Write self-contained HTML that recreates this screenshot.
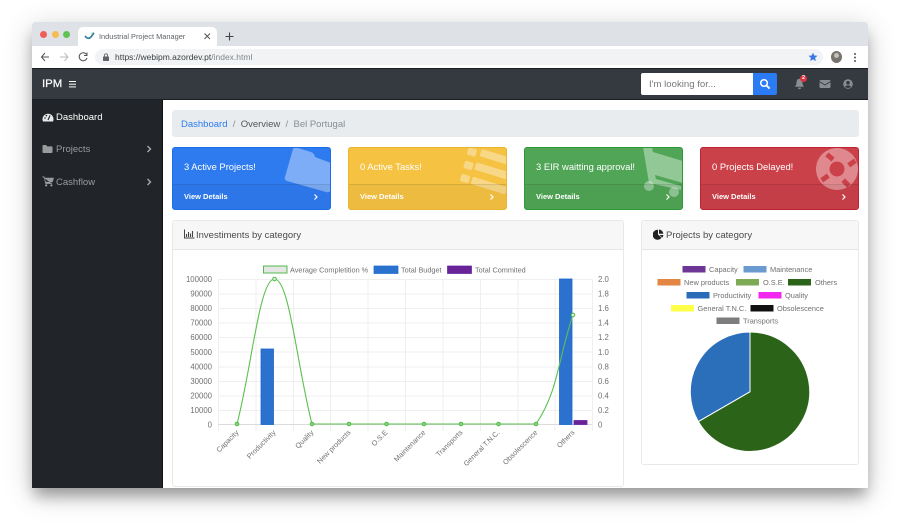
<!DOCTYPE html>
<html><head><meta charset="utf-8">
<style>
*{box-sizing:border-box;margin:0;padding:0}
html,body{width:900px;height:531px;overflow:hidden;background:#fff;font-family:"Liberation Sans",sans-serif}
.a{position:absolute;white-space:nowrap}
#win{position:absolute;left:32px;top:22px;width:836px;height:466px;box-shadow:0 10px 14px -2px rgba(0,0,0,.3),0 6px 30px rgba(0,0,0,.2);border-radius:4px 4px 2px 2px}
.card{position:absolute;top:147px;width:159px;height:63px;border-radius:3px;overflow:hidden;color:#fff}
.card .t{position:absolute;left:11px;top:12px;font-size:9.4px;line-height:13px;white-space:nowrap}
.card .f{position:absolute;left:0;right:0;top:36px;bottom:0;background:rgba(0,0,0,.035);border-top:1px solid rgba(0,0,0,.09)}
.card .v{position:absolute;left:11px;top:7px;font-size:7.5px;line-height:10px;font-weight:bold}
.card svg{position:absolute;left:0;top:0}
.panel{position:absolute;background:#fff;border:1px solid #e8e8e8;border-radius:3px}
.ph{position:absolute;left:0;right:0;top:0;height:29px;background:#f7f7f7;border-bottom:1px solid #e6e6e6;border-radius:3px 3px 0 0}
.side{font-size:9.5px;color:#9a9b9d}
</style></head>
<body>
<div id="win"></div>
<!-- browser chrome -->
<div class="a" style="left:32px;top:22px;width:836px;height:24px;background:#dee1e6;border-radius:4px 4px 0 0"></div>
<div class="a" style="left:40px;top:31px;width:7px;height:7px;border-radius:50%;background:#ee5f57"></div>
<div class="a" style="left:52px;top:31px;width:7px;height:7px;border-radius:50%;background:#f5bd4f"></div>
<div class="a" style="left:63px;top:31px;width:7px;height:7px;border-radius:50%;background:#62c354"></div>
<div class="a" style="left:78px;top:27px;width:139px;height:19px;background:#fff;border-radius:5px 5px 0 0"></div>
<svg class="a" style="left:84px;top:31px" width="12" height="10" viewBox="0 0 12 10"><path d="M1 5 Q4 9 7 6 L10 2" stroke="#2b7d9c" stroke-width="1.6" fill="none"/><path d="M7 3 L10 1" stroke="#9cc" stroke-width="1"/></svg>
<div class="a" style="left:99px;top:31.5px;font-size:7.4px;line-height:10px;color:#5f6368">Industrial Project Manager</div>
<svg class="a" style="left:203px;top:32px" width="9" height="9"><path d="M1.5 1.5 L7 7 M7 1.5 L1.5 7" stroke="#555" stroke-width="1"/></svg>
<svg class="a" style="left:224px;top:31px" width="11" height="11"><path d="M5.5 1.5 V9.5 M1.5 5.5 H9.5" stroke="#444" stroke-width="1.1"/></svg>
<div class="a" style="left:32px;top:46px;width:836px;height:22px;background:#fff"></div>
<svg class="a" style="left:40px;top:50px" width="50" height="14" fill="none"><path d="M1.5 7 H9 M5 3 L1.5 7 L5 11" stroke="#555" stroke-width="1"/><path d="M20 7 H28 M24.5 3 L28 7 L24.5 11" stroke="#bbb" stroke-width="1"/><path d="M46.5 4.5 A4 4 0 1 0 47 8" stroke="#555" stroke-width="1"/><path d="M47 2.5 V5.5 H44" stroke="#555" stroke-width="1"/></svg>
<div class="a" style="left:95px;top:49px;width:728px;height:16px;background:#f1f3f4;border-radius:8px"></div>
<svg class="a" style="left:102px;top:53px" width="8" height="9"><rect x="1" y="3.5" width="6" height="4.5" rx=".6" fill="#5f6368"/><path d="M2.4 3.5 V2.4 A1.6 1.6 0 0 1 5.6 2.4 V3.5" stroke="#5f6368" fill="none" stroke-width=".9"/></svg>
<div class="a" style="left:115px;top:52px;font-size:8.5px;line-height:11px;color:#3c4043">https://webipm.azordev.pt<span style="color:#80868b">/index.html</span></div>
<svg class="a" style="left:808px;top:52px" width="10" height="10"><path d="M5 .6 L6.3 3.5 L9.5 3.8 L7.1 5.9 L7.8 9.1 L5 7.4 L2.2 9.1 L2.9 5.9 L.5 3.8 L3.7 3.5 Z" fill="#3b78e7"/></svg>
<div class="a" style="left:831px;top:51px;width:11px;height:12px;border-radius:50%;background:#77736d"></div>
<div class="a" style="left:834px;top:53px;width:5px;height:5px;border-radius:50%;background:#c4c1ba"></div>
<div class="a" style="left:854px;top:53px;width:2px;height:2px;background:#555;border-radius:50%;box-shadow:0 3.5px 0 #555,0 7px 0 #555"></div>
<!-- navbar -->
<div class="a" style="left:32px;top:68px;width:836px;height:32px;background:#343a40;border-top:1px solid #1c1f22;border-bottom:1px solid #1c1f22"></div>
<div class="a" style="left:42px;top:77px;font-size:11.4px;line-height:15px;color:#fff;-webkit-text-stroke:.2px #fff">IPM</div>
<div class="a" style="left:69px;top:81px;width:7px;height:1.4px;background:#fff;box-shadow:0 2.7px 0 #fff,0 5.4px 0 #fff"></div>
<div class="a" style="left:641px;top:73px;width:112px;height:22px;background:#fff;border-radius:2px 0 0 2px;font-size:9.6px;line-height:23px;color:#777;padding-left:8px">I'm looking for...</div>
<div class="a" style="left:753px;top:73px;width:24px;height:22px;background:#2b7bf4;border-radius:0 2px 2px 0"></div>
<svg class="a" style="left:759px;top:78px" width="12" height="12" fill="none"><circle cx="5" cy="5" r="3.3" stroke="#fff" stroke-width="1.5"/><path d="M7.6 7.6 L10.6 10.6" stroke="#fff" stroke-width="1.9"/></svg>
<svg class="a" style="left:794px;top:78px" width="11" height="12"><path d="M5.5 .8 C8 .8 8.5 3 8.5 5 C8.5 7 9.7 8 10 8.8 H1 C1.3 8 2.5 7 2.5 5 C2.5 3 3 .8 5.5 .8 Z" fill="#8a8e92"/><path d="M4 9.6 H7 A1.5 1.5 0 0 1 4 9.6" fill="#8a8e92"/></svg>
<div class="a" style="left:800px;top:75px;width:7px;height:7px;border-radius:50%;background:#d9333f;color:#fff;font-size:5.5px;line-height:7px;text-align:center;font-weight:bold">2</div>
<svg class="a" style="left:819px;top:79px" width="12" height="10"><rect x=".5" y="1" width="11" height="8" rx="1" fill="#8a8e92"/><path d="M.5 2.6 L6 6 L11.5 2.6" stroke="#343a40" stroke-width=".9" fill="none"/></svg>
<svg class="a" style="left:843px;top:79px" width="10" height="10"><circle cx="5" cy="5" r="4.8" fill="#8a8e92"/><circle cx="5" cy="3.8" r="1.8" fill="#343a40"/><path d="M2 8 C2.5 5.8 7.5 5.8 8 8 C6.5 9.3 3.5 9.3 2 8 Z" fill="#343a40"/></svg>
<!-- sidebar -->
<div class="a" style="left:32px;top:100px;width:131px;height:388px;background:#212529;border-right:1px solid #111"></div>
<svg class="a" style="left:42px;top:112px" width="12" height="10"><path d="M1 9.5 A5.5 5.5 0 1 1 11 9.5 Z" fill="#e9e9ea"/><path d="M6 8 L8 3.5" stroke="#212529" stroke-width="1.1"/><circle cx="3" cy="6" r=".8" fill="#212529"/><circle cx="4.4" cy="3.6" r=".8" fill="#212529"/></svg>
<div class="a side" style="left:56px;top:112px;line-height:12px;color:#fff">Dashboard</div>
<svg class="a" style="left:42px;top:144px" width="11" height="10"><path d="M.5 2 Q.5 1 1.5 1 H4 L5.2 2.4 H9.5 Q10.5 2.4 10.5 3.4 V8 Q10.5 9 9.5 9 H1.5 Q.5 9 .5 8 Z" fill="#9a9b9d"/></svg>
<div class="a side" style="left:56px;top:144px;line-height:12px">Projects</div>
<svg class="a" style="left:146px;top:145px" width="6" height="8" fill="none"><path d="M1.5 1 L4.5 4 L1.5 7" stroke="#a6a7a9" stroke-width="1.4"/></svg>
<svg class="a" style="left:42px;top:176px" width="12" height="11"><path d="M.3 .8 H2.2 L3.6 7.6 H10 M2.8 2 H11.5 L10.4 6 H3.4 Z" fill="#9a9b9d" stroke="#9a9b9d" stroke-width=".6"/><circle cx="4.2" cy="9.4" r="1.1" fill="#9a9b9d"/><circle cx="9.4" cy="9.4" r="1.1" fill="#9a9b9d"/></svg>
<div class="a side" style="left:56px;top:177px;line-height:12px">Cashflow</div>
<svg class="a" style="left:146px;top:178px" width="6" height="8" fill="none"><path d="M1.5 1 L4.5 4 L1.5 7" stroke="#a6a7a9" stroke-width="1.4"/></svg>
<!-- content -->
<div class="a" style="left:163px;top:100px;width:705px;height:388px;background:#fff"></div>
<div class="a" style="left:172px;top:110px;width:687px;height:27px;background:#e9ecef;border-radius:3px;font-size:9.5px;line-height:29px;padding-left:9px;color:#868e96"><span style="color:#2b7bf4">Dashboard</span>&nbsp; /&nbsp; <span style="color:#555">Overview</span>&nbsp; /&nbsp; Bel Portugal</div>

<div class="card" style="left:172px;background:#2e7bf0;border:1px solid #1c6ee8">
<svg width="159" height="63"><path d="M120 1 Q121 -1 125 0 L138 4 Q141 5 142 9 L158 15 V42 Q157 45 153 44 L114 33 Q111 32 112 29 Z" fill="#fff" fill-opacity=".38"/></svg>
<div class="t">3 Active Projects!</div><div class="f"><div class="v">View Details</div></div>
<svg style="left:140px;top:45px" width="6" height="8" fill="none"><path d="M1.5 1.5 L4 4 L1.5 6.5" stroke="#fff" stroke-width="1.2"/></svg></div>

<div class="card" style="left:348px;background:#f5c242;border:1px solid #e9b52f">
<svg width="159" height="63" fill="#fff" fill-opacity=".36"><rect x="118.5" y="0.2" width="9" height="7.6" rx="1.5" transform="rotate(17 123 4)"/><rect x="131" y="5.2" width="30" height="7.6" rx="1.5" transform="rotate(17 146 9)"/><rect x="115" y="13.7" width="9" height="7.6" rx="1.5" transform="rotate(17 119.5 17.5)"/><rect x="125.5" y="19.2" width="35" height="7.6" rx="1.5" transform="rotate(17 143 23)"/><rect x="111.5" y="26.7" width="9" height="7.6" rx="1.5" transform="rotate(17 116 30.5)"/><rect x="122" y="33.7" width="36" height="7.6" rx="1.5" transform="rotate(17 140 37.5)"/></svg>
<div class="t">0 Active Tasks!</div><div class="f"><div class="v">View Details</div></div>
<svg style="left:140px;top:45px" width="6" height="8" fill="none"><path d="M1.5 1.5 L4 4 L1.5 6.5" stroke="#fff" stroke-width="1.2"/></svg></div>

<div class="card" style="left:524px;background:#50a556;border:1px solid #2d9a3a">
<svg width="159" height="63" fill="#fff" fill-opacity=".38"><path d="M118 -1 H127 L128 4 L158 13 V35 L130 27 L131 31 L156 38 V42 L124 35 Z"/><circle cx="124" cy="38" r="5"/><circle cx="149" cy="44" r="5"/></svg>
<div class="t">3 EIR waitting approval!</div><div class="f"><div class="v">View Details</div></div>
<svg style="left:140px;top:45px" width="6" height="8" fill="none"><path d="M1.5 1.5 L4 4 L1.5 6.5" stroke="#fff" stroke-width="1.2"/></svg></div>

<div class="card" style="left:700px;background:#cb414a;border:1px solid #bf2230">
<svg width="159" height="63"><path fill-rule="evenodd" fill="#fff" fill-opacity=".38" d="M136 0 a21 21 0 1 0 .01 0 Z M136 13.5 a7.5 7.5 0 1 1 -.01 0 Z"/><g fill="#cb414a"><rect x="125" y="6.5" width="8" height="5" transform="rotate(40 129 9)"/><rect x="147" y="12.5" width="8" height="5" transform="rotate(-35 151 15)"/><rect x="120" y="27.5" width="8" height="5" transform="rotate(-35 124 30)"/><rect x="141" y="32.5" width="8" height="5" transform="rotate(45 145 35)"/></g></svg>
<div class="t">0 Projects Delayed!</div><div class="f"><div class="v">View Details</div></div>
<svg style="left:140px;top:45px" width="6" height="8" fill="none"><path d="M1.5 1.5 L4 4 L1.5 6.5" stroke="#fff" stroke-width="1.2"/></svg></div>

<div class="panel" style="left:172px;top:220px;width:452px;height:267px"><div class="ph"></div>
<svg class="a" style="left:11px;top:8px" width="11" height="10" fill="none"><path d="M.5 .5 V9 H10.5" stroke="#444"/><path d="M2.5 8 V5 M4.5 8 V3 M6.5 8 V4.5 M8.5 8 V2" stroke="#444" stroke-width="1.1"/></svg>
<div class="a" style="left:23px;top:7.5px;font-size:9.5px;line-height:13px;color:#4a4a4a">Investiments by category</div></div>

<div class="panel" style="left:641px;top:220px;width:218px;height:245px"><div class="ph"></div>
<svg class="a" style="left:11px;top:8px" width="11" height="11"><path d="M5 .8 V5.5 L8.6 8.8 A5 5 0 1 1 5 .8 Z" fill="#222"/><path d="M6 .5 A4.7 4.7 0 0 1 10.4 4.8 H6 Z" fill="#222"/><path d="M6.5 6 H10.4 A5 5 0 0 1 9.3 8.6 Z" fill="#222"/></svg>
<div class="a" style="left:24px;top:7.5px;font-size:9.5px;line-height:13px;color:#4a4a4a">Projects by category</div></div>

<svg class="a" style="left:0;top:0" width="900" height="531" font-family="Liberation Sans, sans-serif" font-size="7.8" fill="#707070">
<!-- grid -->
<g stroke="#efefef" stroke-width="1">
<path d="M218 279.5H592M218 294H592M218 308.5H592M218 323H592M218 337.5H592M218 352H592M218 367H592M218 381.5H592M218 396H592M218 410.5H592"/>
<path d="M218.5 279V431M256 279V431M293.5 279V431M330.5 279V431M368 279V431M405.5 279V431M443 279V431M480.5 279V431M518 279V431M555 279V431M592.5 279V431"/>
</g>
<path d="M218 424.5H592" stroke="#dcdcdc"/>
<!-- left ticks -->
<g text-anchor="end">
<text x="212" y="282">100000</text><text x="212" y="296.5">90000</text><text x="212" y="311">80000</text><text x="212" y="325.5">70000</text><text x="212" y="340">60000</text><text x="212" y="355">50000</text><text x="212" y="369.5">40000</text><text x="212" y="384">30000</text><text x="212" y="398.5">20000</text><text x="212" y="413">10000</text><text x="212" y="427.5">0</text>
</g>
<!-- right ticks -->
<text x="598" y="282">2.0</text><text x="598" y="296.5">1.8</text><text x="598" y="311">1.6</text><text x="598" y="325.5">1.4</text><text x="598" y="340">1.2</text><text x="598" y="355">1.0</text><text x="598" y="369.5">0.8</text><text x="598" y="384">0.6</text><text x="598" y="398.5">0.4</text><text x="598" y="413">0.2</text><text x="598" y="427.5">0</text>
<!-- x labels -->
<g text-anchor="end" font-size="7.2">
<text transform="translate(239 433) rotate(-45)">Capacity</text>
<text transform="translate(276 433) rotate(-45)">Productivity</text>
<text transform="translate(314 433) rotate(-45)">Quality</text>
<text transform="translate(351 433) rotate(-45)">New products</text>
<text transform="translate(388 433) rotate(-45)">O.S.E</text>
<text transform="translate(426 433) rotate(-45)">Maintenance</text>
<text transform="translate(463 433) rotate(-45)">Transports</text>
<text transform="translate(500 433) rotate(-45)">General T.N.C.</text>
<text transform="translate(538 433) rotate(-45)">Obsolescence</text>
<text transform="translate(575 433) rotate(-45)">Others</text>
</g>
<!-- bars -->
<rect x="261" y="349" width="12.5" height="75.5" fill="#2b72cf" stroke="#1a66cc" stroke-width=".8"/>
<rect x="559.5" y="279" width="12.5" height="145.5" fill="#2b72cf" stroke="#1a66cc" stroke-width=".8"/>
<rect x="574" y="420.5" width="13" height="4" fill="#6a2396" stroke="#6a1fa0" stroke-width=".8"/>
<!-- line -->
<path d="M237 424 C252 366 259.5 279 274.5 279 C289.5 279 297 366 312 424 L536 424 C558.5 391 558 358.6 573 315" fill="none" stroke="#5cc04e" stroke-width="1.1"/>
<g fill="#8fd486" stroke="#4fb846" stroke-width="1">
<circle cx="237" cy="424" r="1.8"/><circle cx="274.5" cy="279" r="1.8" fill="#dff2db"/><circle cx="312" cy="424" r="1.8"/><circle cx="349" cy="424" r="1.8"/><circle cx="386.5" cy="424" r="1.8"/><circle cx="424" cy="424" r="1.8"/><circle cx="461" cy="424" r="1.8"/><circle cx="498.5" cy="424" r="1.8"/><circle cx="536" cy="424" r="1.8"/><circle cx="573" cy="315" r="1.8" fill="#dff2db"/>
</g>
<!-- top legend -->
<g font-size="7.3">
<rect x="263.5" y="266" width="23.5" height="7" fill="#e4e7e4" stroke="#56b84c"/>
<text x="290" y="272.6">Average Completition %</text>
<rect x="374" y="266" width="24" height="7.5" fill="#2b72cf" stroke="#1a66cc" stroke-width=".7"/>
<text x="401" y="272.6">Total Budget</text>
<rect x="447.5" y="266" width="24" height="7.5" fill="#6a2396" stroke="#5f1fa0" stroke-width=".7"/>
<text x="475" y="272.6">Total Commited</text>
</g>
<!-- pie legend -->
<g font-size="7.4">
<rect x="682.5" y="266" width="23" height="6.5" fill="#6c3596"/><text x="709" y="272">Capacity</text>
<rect x="743.5" y="266" width="23" height="6.5" fill="#6a9ad0"/><text x="770" y="272">Maintenance</text>
<rect x="657.5" y="279" width="23" height="6.5" fill="#e38543"/><text x="684" y="285">New products</text>
<rect x="736" y="279" width="23" height="6.5" fill="#7ea957"/><text x="763" y="285">O.S.E.</text>
<rect x="788" y="279" width="23" height="6.5" fill="#2b6318"/><text x="815" y="285">Others</text>
<rect x="686.5" y="292" width="23" height="6.5" fill="#2b6cb8"/><text x="713" y="298">Productivity</text>
<rect x="758.5" y="292" width="23" height="6.5" fill="#f226ee"/><text x="785" y="298">Quality</text>
<rect x="671" y="305" width="23" height="6.5" fill="#ffff4a"/><text x="697.5" y="311">General T.N.C.</text>
<rect x="750.5" y="305" width="23" height="6.5" fill="#111"/><text x="777" y="311">Obsolescence</text>
<rect x="716.5" y="317.5" width="23" height="6.5" fill="#7d7d7d"/><text x="743" y="323.5">Transports</text>
</g>
<!-- pie -->
<path d="M750 391.7 L750 332 A59.7 59.7 0 1 1 698.3 421.55 Z" fill="#2b6318" stroke="#fff" stroke-width="1"/>
<path d="M750 391.7 L698.3 421.55 A59.7 59.7 0 0 1 750 332 Z" fill="#2b6fba" stroke="#fff" stroke-width="1"/>
</svg>
</body></html>
